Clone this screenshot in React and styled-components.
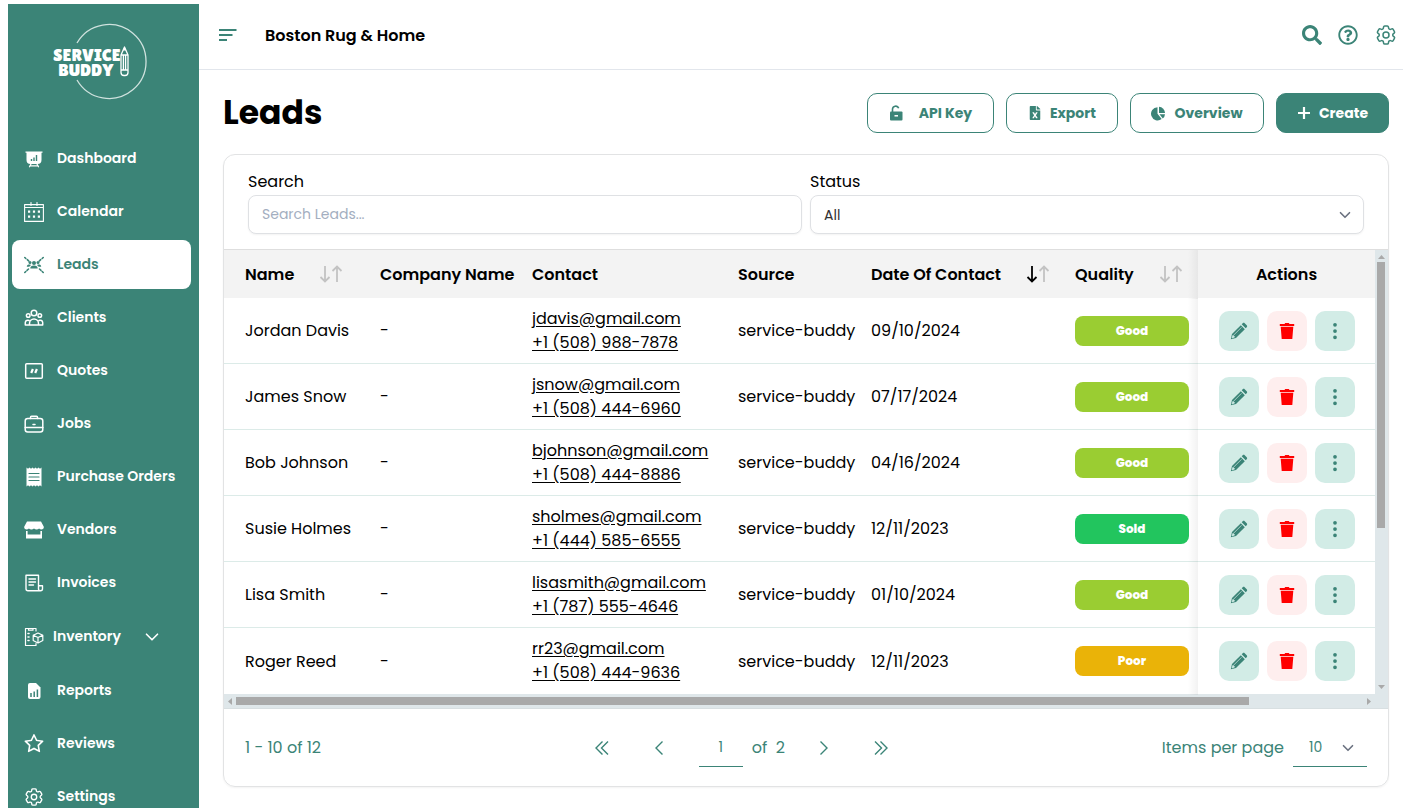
import React from "react";
import styled, { createGlobalStyle } from "styled-components";
import { ChevronDown } from "lucide-react";
import { FaSearch, FaRegQuestionCircle, FaFileExcel } from "react-icons/fa";
import { BsThreeDotsVertical } from "react-icons/bs";
import { HiOutlineCog6Tooth } from "react-icons/hi2";
import { AiOutlineStar } from "react-icons/ai";

const green = "#3b8477";

const GlobalStyle = createGlobalStyle`
  * {
    box-sizing: border-box;
  }
  body {
    margin: 0;
    background-color: #fff;
    color: #000;
    font-family: "Poppins", "Inter", sans-serif;
    font-size: 16px;
  }
  button,
  input,
  select {
    font-family: inherit;
  }
  svg {
    display: block;
    flex-shrink: 0;
  }
`;

const Page = styled.div`
  display: flex;
  height: 100vh;
  padding: 4px 7px 0 8px;
  overflow: hidden;
`;

const Sidebar = styled.aside`
  width: 191px;
  flex-shrink: 0;
  background-color: ${green};
  overflow: hidden;
`;

const LogoLink = styled.a`
  display: flex;
  justify-content: center;
  padding: 19px 8px 0 0;
  height: 130px;
`;

const Nav = styled.nav`
  display: flex;
  flex-direction: column;
  gap: 4px;
  padding: 0 8px 0 4px;
`;

const NavItem = styled.a`
  display: flex;
  align-items: center;
  gap: ${(props) => (props.$group ? "9px" : "13px")};
  height: ${(props) => (props.$group ? "51px" : "49px")};
  flex-shrink: 0;
  padding: 0 12px;
  border-radius: 8px;
  font-size: 14px;
  font-weight: 600;
  text-decoration: none;
  white-space: nowrap;
  color: ${(props) => (props.$active ? green : "#fff")};
  background-color: ${(props) => (props.$active ? "#fff" : "transparent")};

  .nav-caret {
    margin-left: 11px;
  }
`;

const Content = styled.div`
  flex: 1;
  min-width: 0;
`;

const Header = styled.header`
  display: flex;
  align-items: center;
  height: 66px;
  padding: 0 5px 3px 20px;
  border-bottom: 1px solid #e2e6ec;
`;

const IconButton = styled.button`
  display: flex;
  align-items: center;
  padding: 0;
  border: none;
  background: none;
  color: ${green};
  cursor: pointer;
`;

const Company = styled.div`
  margin-left: 28px;
  font-weight: 600;
`;

const HeaderTools = styled.div`
  display: flex;
  gap: 16px;
  margin-left: auto;
`;

const Main = styled.main`
  padding: 23px 14px 0 24px;
`;

const TitleBar = styled.div`
  display: flex;
  align-items: center;
  justify-content: space-between;
  height: 40px;
  margin-bottom: 21px;
`;

const Title = styled.h1`
  margin: 0;
  font-size: 33px;
  font-weight: 700;
  line-height: 40px;
`;

const ButtonRow = styled.div`
  display: flex;
  gap: 12px;
`;

const Button = styled.button`
  display: flex;
  align-items: center;
  justify-content: center;
  gap: ${(props) => props.$gap || "8px"};
  height: 40px;
  min-width: ${(props) => props.$width};
  padding: 0 18px;
  border: 1px solid ${green};
  border-radius: 10px;
  font-size: 14px;
  font-weight: 700;
  color: ${(props) => (props.$primary ? "#fff" : green)};
  background-color: ${(props) => (props.$primary ? green : "#fff")};
  cursor: pointer;
`;

const Card = styled.section`
  border: 1px solid #e2e3e4;
  border-radius: 12px;
  box-shadow: 0 1px 2px #0000000d;
  overflow: hidden;
`;

const Filters = styled.div`
  display: grid;
  grid-template-columns: 1fr 1fr;
  gap: 8px;
  padding: 15px 24px;
`;

const Field = styled.div`
  label {
    display: block;
    margin-bottom: 1px;
    line-height: 24px;
  }
`;

const fieldBox = `
  width: 100%;
  height: 39px;
  padding: 0 13px;
  border: 1px solid #dfe1e4;
  border-radius: 8px;
  outline: none;
  font-size: 14px;
  color: #333;
  background-color: #fff;
  box-shadow: 0 1px 2px #0000000d;
`;

const TextInput = styled.input`
  ${fieldBox}
  &::placeholder {
    color: #a3aec0;
  }
`;

const SelectBox = styled.div`
  display: grid;
  align-items: center;

  select,
  svg {
    grid-area: 1 / 1;
  }
  select {
    appearance: none;
  }
  svg {
    justify-self: end;
    margin-right: 10px;
    color: #6b7280;
    pointer-events: none;
  }
`;

const Select = styled.select`
  ${fieldBox}
`;

const ScrollGrid = styled.div`
  display: grid;
  grid-template-columns: 1fr 13px;
  border-top: 1px solid #dedede;
  border-bottom: 1px solid #d8dfe1;
`;

const Table = styled.table`
  width: 100%;
  table-layout: fixed;
  border-collapse: separate;
  border-spacing: 0;

  th,
  td {
    padding: 0 0 0 10px;
    text-align: left;
    white-space: nowrap;
  }
  th:first-child,
  td:first-child {
    padding-left: 21px;
  }
  th {
    height: 48px;
    font-weight: 600;
    background-color: #f3f3f3;
  }
  td {
    height: 66px;
    border-bottom: 1px solid #dcebe8;
  }
  tr:last-child td {
    border-bottom: none;
  }
  td a {
    display: block;
    width: fit-content;
    line-height: 24px;
    color: inherit;
    text-underline-offset: 2px;
  }
  th:last-child,
  td:last-child {
    position: relative;
    padding: 0;
    text-align: center;
  }
  th:last-child::before,
  td:last-child::before {
    content: "";
    position: absolute;
    top: 0;
    bottom: -1px;
    left: -10px;
    width: 10px;
    background: linear-gradient(to right, #00000000, #0000000d);
  }
`;

const Col = styled.col`
  width: ${(props) => props.$width};
`;

const HeadCell = styled.div`
  display: flex;
  align-items: center;
  justify-content: space-between;
  padding-right: ${(props) => props.$end || "0"};
`;

const SortButton = styled.button`
  display: flex;
  padding: 0;
  border: none;
  background: none;
  color: #c3c3c3;
  cursor: pointer;

  .sorted {
    color: #000;
  }
`;

const qualityColors = {
  Good: "#9acd32",
  Sold: "#22c55e",
  Poor: "#eab308",
};

const Badge = styled.div`
  height: 30px;
  margin-right: 9px;
  border-radius: 8px;
  font-size: 12px;
  font-weight: 800;
  line-height: 29px;
  text-align: center;
  color: #fff;
  background-color: ${(props) => qualityColors[props.$quality]};
`;

const RowActions = styled.div`
  display: flex;
  justify-content: center;
  gap: 8px;
`;

const RowButton = styled.button`
  display: flex;
  align-items: center;
  justify-content: center;
  width: 40px;
  height: 40px;
  padding: 0;
  border: none;
  border-radius: 10px;
  color: ${(props) => (props.$danger ? "#f00" : green)};
  background-color: ${(props) => (props.$danger ? "#feeeee" : "#d2ece6")};
  cursor: pointer;
`;

const VerticalBar = styled.div`
  display: flex;
  flex-direction: column;
  align-items: center;
  padding: 5px 3px 4px 2px;
  color: #a9a9a9;
  background-color: #dfe7ea;

  .lane {
    flex: 1;
    width: 8px;
    padding-top: 2px;
  }
  .thumb {
    height: 63%;
    background-color: #a9a9a9;
  }
`;

const HorizontalBar = styled.div`
  grid-column: 1 / -1;
  display: flex;
  align-items: center;
  height: 14px;
  padding: 0 17px 0 4px;
  color: #a9a9a9;
  background-color: #dfe7ea;

  .lane {
    flex: 1;
    height: 8px;
    padding: 0 5px 0 4px;
  }
  .thumb {
    width: 90%;
    height: 8px;
    background-color: #a9a9a9;
  }
`;

const Footer = styled.footer`
  display: flex;
  align-items: center;
  justify-content: space-between;
  height: 77px;
  padding: 0 21px;
  color: ${green};
`;

const Pager = styled.div`
  display: flex;
  align-items: center;

  .page-total {
    margin: 0 32px 0 9px;
  }
`;

const PageButton = styled(IconButton)`
  width: 14px;
  justify-content: center;
  margin-right: ${(props) => props.$after || "0"};
`;

const PageInput = styled.input`
  width: 44px;
  height: 38px;
  padding: 0;
  border: none;
  border-bottom: 1px solid ${green};
  outline: none;
  font-size: 14px;
  text-align: center;
  color: ${green};
`;

const PageSize = styled.div`
  display: flex;
  align-items: center;
  gap: 9px;
`;

const PageSizeSelect = styled.select`
  width: 74px;
  height: 38px;
  padding: 0 16px;
  border: none;
  border-bottom: 1px solid ${green};
  outline: none;
  font-size: 14px;
  color: ${green};
  background-color: #fff;
`;

function Logo() {
  return (
    <svg width="98" height="78" viewBox="0 0 98 78" role="img" aria-label="Service Buddy">
      <path d="M26 20 A37 37 0 1 1 26 57" fill="none" stroke="#cfe2de" strokeWidth="1.3" />
      <text
        fill="#fff"
        fontFamily="'Luckiest Guy', 'Lilita One', Lato, sans-serif"
        fontSize="18"
      >
        <tspan x="2" y="38">SERVICE</tspan>
        <tspan x="7" y="53">BUDDY</tspan>
      </text>
      <path
        d="M70 32 L73.500 24 L77 32 V49.500 a3 3 0 0 1 -3 3 h-1 a3 3 0 0 1 -3 -3 z M70 32 h7 M70 47 h7 M72.400 32 v15 M74.600 32 v15"
        fill="none"
        stroke="#fff"
        strokeWidth="1.3"
        strokeLinejoin="round"
      />
      <path d="M71.800 27.500 L73.500 23.500 L75.200 27.500 z" fill="#fff" />
    </svg>
  );
}

function Icon({ children, stroke = 1.4 }) {
  return (
    <svg
      width="20"
      height="20"
      viewBox="0 0 20 20"
      fill="none"
      stroke="currentColor"
      strokeWidth={stroke}
      strokeLinecap="round"
      strokeLinejoin="round"
      aria-hidden="true"
    >
      {children}
    </svg>
  );
}

const DashboardIcon = () => (
  <Icon>
    <path d="M1.500 2.500h17v1.300h-1V11a4 4 0 0 1-4 4h-7a4 4 0 0 1-4-4V3.800h-1z" fill="currentColor" stroke="none" />
    <path d="M7 15l-1.500 2.800M13 15l1.500 2.800M5.800 16.800h8.400" strokeWidth="1.2" />
    <path d="M7.500 12v-2M10 12V8.500M12.500 12V6" stroke={green} strokeWidth="1.4" strokeLinecap="butt" />
  </Icon>
);

const CalendarIcon = () => (
  <Icon stroke={1.1}>
    <path d="M.6 2.600h18.800v16.800H.6zM.6 5.500h18.800M7 .5v3M13 .5v3" />
    <g fill="currentColor" stroke="none">
      <path d="M4 8.500h2.200v2.200H4zM8.900 8.500h2.200v2.200H8.900zM13.800 8.500H16v2.200h-2.200zM4 13.500h2.200v2.200H4zM8.900 13.500h2.200v2.200H8.900zM13.800 13.500H16v2.200h-2.200z" />
    </g>
  </Icon>
);

const LeadsIcon = () => (
  <Icon stroke={1.6}>
    <path d="M.8 2.500l1 1M3.300 4.700l1.300 1.200M19.200 2.500l-1 1M16.700 4.700l-1.300 1.200M.8 17.500l1-1M3 15.300l1.500-1.300M19.200 17.500l-1-1M17 15.300L15.500 14" />
    <g fill="currentColor" stroke="none">
      <circle cx="10" cy="8" r="2" />
      <circle cx="6" cy="7.600" r="1.500" />
      <circle cx="14" cy="7.600" r="1.500" />
      <path d="M6.300 13.500c0-2.200 1.400-3 3.700-3s3.700.8 3.700 3zM2.800 11.700c0-1.700 1-2.300 2.800-2.300.8 0 1.200.2 1.600.5-1 .5-1.500 1-1.700 1.800zM17.200 11.700c0-1.700-1-2.300-2.800-2.300-.8 0-1.200.2-1.600.5 1 .5 1.500 1 1.700 1.800z" />
    </g>
  </Icon>
);

const ClientsIcon = () => (
  <Icon stroke={1.5}>
    <circle cx="10" cy="5" r="2.800" />
    <circle cx="4.200" cy="7.500" r="1.800" />
    <circle cx="15.800" cy="7.500" r="1.800" />
    <path d="M5.500 17v-1.500a4.500 4.500 0 0 1 9 0V17zM5.500 17H1.300v-2.500a2.500 2.500 0 0 1 3.700-2M14.500 17h4.200v-2.500a2.500 2.500 0 0 0-3.700-2" />
  </Icon>
);

const QuotesIcon = () => (
  <Icon stroke={1.5}>
    <rect x="1.700" y="2.700" width="16.600" height="14.600" rx="1" />
    <path d="M8.900 8l-1.700 4M12.900 8l-1.700 4" strokeWidth="2.2" strokeLinecap="butt" />
  </Icon>
);

const JobsIcon = () => (
  <Icon stroke={1.5}>
    <rect x="1.200" y="4.500" width="17.600" height="13.500" rx="2.500" />
    <path d="M6.500 4.500V3.200c0-.6.4-1 1-1h5c.6 0 1 .4 1 1v1.300M1.200 13.500h17.600M9 10.500h2" />
  </Icon>
);

const OrdersIcon = () => (
  <Icon>
    <path
      d="M2.500.5L4 1.800 5.500.5 7 1.800 8.500.5 10 1.800 11.500.5 13 1.800 14.500.5 16 1.800 17.500.5v19L16 18.200l-1.500 1.300-1.500-1.300-1.500 1.300-1.500-1.300-1.500 1.300L7 18.200l-1.500 1.300L4 18.200l-1.500 1.300z"
      fill="currentColor"
      stroke="none"
    />
    <path d="M5 6.500h10M5 10h10M5 13.500h10" stroke={green} strokeWidth="1.2" />
  </Icon>
);

const VendorsIcon = () => (
  <Icon>
    <path
      d="M3 1.500h14l2.700 5c.5 1.800-.7 3-2.200 3-1 0-1.700-.4-2.400-1-.8.600-1.600 1-2.500 1s-1.800-.4-2.600-1c-.8.6-1.700 1-2.600 1s-1.700-.4-2.500-1c-.7.600-1.400 1-2.400 1-1.500 0-2.700-1.200-2.200-3zM2 11h1.600v3.500h12.800V11H18v7.500H2z"
      fill="currentColor"
      stroke="none"
    />
  </Icon>
);

const InvoicesIcon = () => (
  <Icon stroke={1.4}>
    <path d="M14.500 12.500V2.200H2v13.600a2 2 0 0 0 2 2h12.500a2 2 0 0 0 2-2v-3h-4v3.200a1.800 1.800 0 0 0 1.800 1.800M5 6h6.500M5 9h6.500M5 12h4.500" />
  </Icon>
);

const InventoryIcon = () => (
  <Icon stroke={1.2}>
    <path d="M12 4V1.500H1.500v17H12V16.500M4.500 1.500v1.700h4.500V1.500" />
    <path d="M14 6l4.800 2.200v5.300L14 16l-4.800-2.500V8.200zM9.200 8.200l4.800 2.300 4.800-2.300M14 10.500V16" />
    <path d="M4 6.500h1M4 10h1M4 13.500h1" strokeWidth="1.600" />
  </Icon>
);

const ReportsIcon = () => (
  <Icon>
    <path d="M6 2h6l4.500 4.500V16a2 2 0 0 1-2 2H6a2 2 0 0 1-2-2V4a2 2 0 0 1 2-2z" fill="currentColor" stroke="none" />
    <path d="M7 16v-4M10.200 16v-5.500M13.400 16V8.500" stroke={green} strokeWidth="1.500" strokeLinecap="butt" />
  </Icon>
);

const UnlockIcon = () => (
  <svg width="14" height="16" viewBox="0 0 14 16" fill="none" aria-hidden="true">
    <path d="M3.500 7V4.500a3.200 3.200 0 0 1 6.200-1.200" stroke="currentColor" strokeWidth="1.600" />
    <rect x="1" y="6.500" width="12.500" height="9" rx="1" fill="currentColor" />
    <path d="M5.500 10.800h3.500" stroke="#fff" strokeWidth="1.500" />
  </svg>
);

const PieIcon = () => (
  <svg width="15" height="15" viewBox="0 0 15 15" fill="currentColor" aria-hidden="true">
    <path d="M6.500 1.200v6.600l4.200 5.200A6.600 6.600 0 1 1 6.500 1.200z" />
    <path d="M8 .8a6.300 6.300 0 0 1 6 6.200H8z" />
    <path d="M8.500 8.300H14a6.300 6.300 0 0 1-2.200 4.300z" />
  </svg>
);

const PlusIcon = () => (
  <svg width="14" height="14" viewBox="0 0 14 14" aria-hidden="true">
    <path d="M7 1v12M1 7h12" stroke="currentColor" strokeWidth="2.200" />
  </svg>
);

const MenuIcon = () => (
  <svg width="18" height="14" viewBox="0 0 18 14" aria-hidden="true">
    <path d="M0 2h17.500M0 7h13.500M0 12h8" stroke="currentColor" strokeWidth="2" />
  </svg>
);

const PencilIcon = () => (
  <svg width="18" height="18" viewBox="0 0 18 18" fill="currentColor" aria-hidden="true">
    <path d="M.8 17.200l1.200-5.200 8.800-8.800 4 4L6 16z" />
    <path d="M11.700 2.300l1-1c.6-.6 1.400-.6 2 0l2 2c.6.6.6 1.400 0 2l-1 1z" />
    <path d="M3.500 13.300l8-8M2 15.900l1-2.600 1.600 1.700z" fill="#d2ece6" stroke="#d2ece6" strokeWidth=".7" />
  </svg>
);

const TrashIcon = () => (
  <svg width="16" height="18" viewBox="0 0 16 18" fill="currentColor" aria-hidden="true">
    <path d="M.8 1.900h4.700l.7-.9h3.600l.7.900h4.700v2H.8zM1.700 4.700h12.600L13.300 17H2.700z" />
  </svg>
);

const SortIcon = ({ sorted }) => (
  <svg width="24" height="18" viewBox="0 0 24 18" fill="none" stroke="currentColor" strokeWidth="1.800" aria-hidden="true">
    <path className={sorted ? "sorted" : undefined} stroke="currentColor" d="M6 1v15.500M1.500 12L6 16.500 10.500 12" />
    <path d="M18 17V1.500M13.500 6L18 1.500 22.500 6" />
  </svg>
);

const PagerIcon = ({ d }) => (
  <svg width="14" height="14" viewBox="0 0 14 14" fill="none" stroke="currentColor" strokeWidth="1.400" aria-hidden="true">
    <path d={d} />
  </svg>
);

const navItems = [
  { label: "Dashboard", icon: <DashboardIcon /> },
  { label: "Calendar", icon: <CalendarIcon /> },
  { label: "Leads", icon: <LeadsIcon />, active: true },
  { label: "Clients", icon: <ClientsIcon /> },
  { label: "Quotes", icon: <QuotesIcon /> },
  { label: "Jobs", icon: <JobsIcon /> },
  { label: "Purchase Orders", icon: <OrdersIcon /> },
  { label: "Vendors", icon: <VendorsIcon /> },
  { label: "Invoices", icon: <InvoicesIcon /> },
  { label: "Inventory", icon: <InventoryIcon />, group: true },
  { label: "Reports", icon: <ReportsIcon /> },
  { label: "Reviews", icon: <AiOutlineStar size={20} viewBox="64 64 896 896" /> },
  { label: "Settings", icon: <HiOutlineCog6Tooth size={20} viewBox="1 1 22 22" /> },
];

const leads = [
  { name: "Jordan Davis", email: "jdavis@gmail.com", phone: "+1 (508) 988-7878", date: "09/10/2024", quality: "Good" },
  { name: "James Snow", email: "jsnow@gmail.com", phone: "+1 (508) 444-6960", date: "07/17/2024", quality: "Good" },
  { name: "Bob Johnson", email: "bjohnson@gmail.com", phone: "+1 (508) 444-8886", date: "04/16/2024", quality: "Good" },
  { name: "Susie Holmes", email: "sholmes@gmail.com", phone: "+1 (444) 585-6555", date: "12/11/2023", quality: "Sold" },
  { name: "Lisa Smith", email: "lisasmith@gmail.com", phone: "+1 (787) 555-4646", date: "01/10/2024", quality: "Good" },
  { name: "Roger Reed", email: "rr23@gmail.com", phone: "+1 (508) 444-9636", date: "12/11/2023", quality: "Poor" },
];

function LeadRow({ lead }) {
  return (
    <tr>
      <td>{lead.name}</td>
      <td>-</td>
      <td>
        <a href={`mailto:${lead.email}`}>{lead.email}</a>
        <a href={`tel:${lead.phone}`}>{lead.phone}</a>
      </td>
      <td>service-buddy</td>
      <td>{lead.date}</td>
      <td>
        <Badge $quality={lead.quality}>{lead.quality}</Badge>
      </td>
      <td>
        <RowActions>
          <RowButton aria-label="Edit">
            <PencilIcon />
          </RowButton>
          <RowButton $danger aria-label="Delete">
            <TrashIcon />
          </RowButton>
          <RowButton aria-label="More">
            <BsThreeDotsVertical size={20} />
          </RowButton>
        </RowActions>
      </td>
    </tr>
  );
}

function LeadsTable() {
  return (
    <ScrollGrid>
      <Table>
        <colgroup>
          <Col />
          <Col $width="152px" />
          <Col $width="206px" />
          <Col $width="133px" />
          <Col $width="204px" />
          <Col $width="133px" />
          <Col $width="177px" />
        </colgroup>
        <thead>
          <tr>
            <th>
              <HeadCell $end="27px">
                Name
                <SortButton aria-label="Sort by name">
                  <SortIcon />
                </SortButton>
              </HeadCell>
            </th>
            <th>Company Name</th>
            <th>Contact</th>
            <th>Source</th>
            <th>
              <HeadCell $end="15px">
                Date Of Contact
                <SortButton aria-label="Sort by date of contact">
                  <SortIcon sorted />
                </SortButton>
              </HeadCell>
            </th>
            <th>
              <HeadCell $end="15px">
                Quality
                <SortButton aria-label="Sort by quality">
                  <SortIcon />
                </SortButton>
              </HeadCell>
            </th>
            <th>Actions</th>
          </tr>
        </thead>
        <tbody>
          {leads.map((lead) => (
            <LeadRow key={lead.name} lead={lead} />
          ))}
        </tbody>
      </Table>
      <VerticalBar aria-hidden="true">
        <svg width="7" height="5" viewBox="0 0 7 5">
          <path d="M3.500 0L7 4H0z" fill="currentColor" />
        </svg>
        <div className="lane">
          <div className="thumb" />
        </div>
        <svg width="7" height="5" viewBox="0 0 7 5">
          <path d="M3.500 4L7 0H0z" fill="currentColor" />
        </svg>
      </VerticalBar>
      <HorizontalBar aria-hidden="true">
        <svg width="4" height="7" viewBox="0 0 4 7">
          <path d="M0 3.500L4 0v7z" fill="currentColor" />
        </svg>
        <div className="lane">
          <div className="thumb" />
        </div>
        <svg width="4" height="7" viewBox="0 0 4 7">
          <path d="M4 3.500L0 0v7z" fill="currentColor" />
        </svg>
      </HorizontalBar>
    </ScrollGrid>
  );
}

export default function App() {
  return (
    <>
      <GlobalStyle />
      <Page>
        <Sidebar>
          <LogoLink href="#home">
            <Logo />
          </LogoLink>
          <Nav>
            {navItems.map((item) => (
              <NavItem
                key={item.label}
                href={`#${item.label.toLowerCase().replace(" ", "-")}`}
                $active={item.active}
                $group={item.group}
              >
                {item.icon}
                {item.label}
                {item.group && <ChevronDown className="nav-caret" size={22} strokeWidth={1.8} />}
              </NavItem>
            ))}
          </Nav>
        </Sidebar>
        <Content>
          <Header>
            <IconButton aria-label="Toggle menu">
              <MenuIcon />
            </IconButton>
            <Company>Boston Rug &amp; Home</Company>
            <HeaderTools>
              <IconButton aria-label="Search">
                <FaSearch size={20} />
              </IconButton>
              <IconButton aria-label="Help">
                <FaRegQuestionCircle size={20} />
              </IconButton>
              <IconButton aria-label="Settings">
                <HiOutlineCog6Tooth size={24} />
              </IconButton>
            </HeaderTools>
          </Header>
          <Main>
            <TitleBar>
              <Title>Leads</Title>
              <ButtonRow>
                <Button $width="127px" $gap="16px">
                  <UnlockIcon />
                  API Key
                </Button>
                <Button $width="112px">
                  <FaFileExcel size={14} />
                  Export
                </Button>
                <Button $width="134px">
                  <PieIcon />
                  Overview
                </Button>
                <Button $width="113px" $primary>
                  <PlusIcon />
                  Create
                </Button>
              </ButtonRow>
            </TitleBar>
            <Card>
              <Filters>
                <Field>
                  <label htmlFor="search">Search</label>
                  <TextInput id="search" type="text" placeholder="Search Leads..." />
                </Field>
                <Field>
                  <label htmlFor="status">Status</label>
                  <SelectBox>
                    <Select id="status">
                      <option>All</option>
                    </Select>
                    <ChevronDown size={18} strokeWidth={2.2} />
                  </SelectBox>
                </Field>
              </Filters>
              <LeadsTable />
              <Footer>
                <div>1 - 10 of 12</div>
                <Pager>
                  <PageButton $after="43px" aria-label="First page">
                    <PagerIcon d="M7.500 .5L1 7l6.500 6.500M13 .5L6.500 7l6.500 6.500" />
                  </PageButton>
                  <PageButton $after="33px" aria-label="Previous page">
                    <PagerIcon d="M10.500 .5L4 7l6.500 6.500" />
                  </PageButton>
                  <PageInput aria-label="Page" defaultValue="1" />
                  <span className="page-total">of&nbsp; 2</span>
                  <PageButton $after="43px" aria-label="Next page">
                    <PagerIcon d="M3.500 .5L10 7l-6.500 6.500" />
                  </PageButton>
                  <PageButton aria-label="Last page">
                    <PagerIcon d="M1 .5L7.500 7 1 13.500M6.500 .5L13 7l-6.500 6.500" />
                  </PageButton>
                </Pager>
                <PageSize>
                  <label htmlFor="page-size">Items per page</label>
                  <SelectBox>
                    <PageSizeSelect id="page-size">
                      <option>10</option>
                    </PageSizeSelect>
                    <ChevronDown size={18} strokeWidth={2.2} />
                  </SelectBox>
                </PageSize>
              </Footer>
            </Card>
          </Main>
        </Content>
      </Page>
    </>
  );
}
